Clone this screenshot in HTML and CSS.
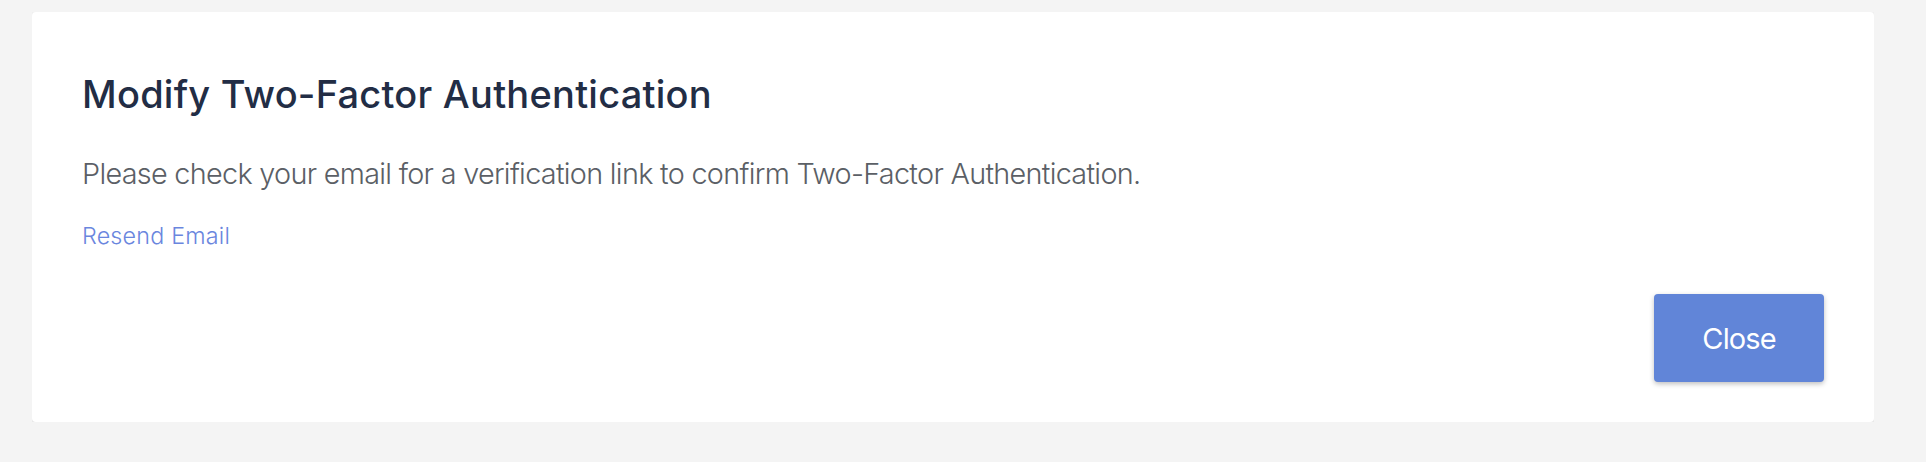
FILE: index.html
```html
<!DOCTYPE html>
<html lang="en">
<head>
  <meta charset="UTF-8" />
  <title>Modify Two-Factor Authentication</title>
  <link rel="stylesheet" href="styles.css">
</head>
<body>

  <!-- Two-factor dialog -->
  <div class="card">
    <h2 class="card-title">Modify Two-Factor Authentication</h2>
    <p class="card-text">Please check your email for a verification link to confirm Two-Factor Authentication.</p>
    <a class="resend-link" href="#">Resend Email</a>
    <div class="card-actions">
      <button class="close-button">Close</button>
    </div>
  </div>

</body>
</html>
```
FILE: styles.css
```css
body {
  margin: 12px 52px 0 32px;
  background-color: #f4f4f4;
  font-family: 'Inter', 'Roboto', sans-serif;
}
.card {
  background: #ffffff;
  border-radius: 4px;
  box-shadow: 0 4px 14px rgba(0, 0, 0, 0.13);
  padding: 59px 50px 40px 50px;
  display: flex;
  flex-direction: column;
  align-items: flex-start;
}
.card-title {
  margin: 0;
  font-size: 38px;
  line-height: 46px;
  font-weight: 500;
  letter-spacing: 0.25px;
  color: #222d45;
}
.card-text {
  margin: 37px 0 0;
  font-size: 28.8px;
  line-height: 40px;
  font-weight: 300;
  letter-spacing: -0.7px;
  color: #5b5f66;
}
.resend-link {
  margin-top: 26px;
  font-size: 23.3px;
  line-height: 32px;
  font-weight: 300;
  letter-spacing: 0.2px;
  color: #6a86de;
  text-decoration: none;
}
.card-actions {
  align-self: stretch;
  display: flex;
  justify-content: flex-end;
  margin-top: 42px;
}
.close-button {
  width: 170px;
  height: 88px;
  border: none;
  border-radius: 4px;
  background-color: #6185d8;
  box-shadow: 0 2px 5px rgba(0, 0, 0, 0.25);
  color: #ffffff;
  font-family: 'Inter', 'Roboto', sans-serif;
  font-size: 29px;
  font-weight: 400;
  letter-spacing: -0.9px;
  cursor: pointer;
}
```
